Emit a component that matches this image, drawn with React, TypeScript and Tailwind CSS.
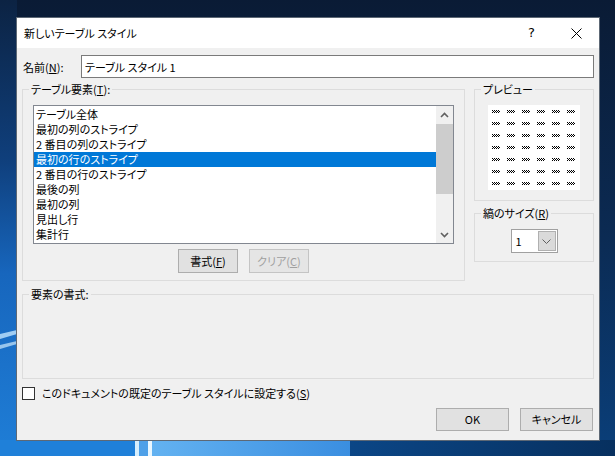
import React from "react";

const FONT = "[font-family:'Noto_Sans_CJK_JP','Noto_Sans',sans-serif] [font-feature-settings:'palt']";

const items = [
  "テーブル全体",
  "最初の列のストライプ",
  "2 番目の列のストライプ",
  "最初の行のストライプ",
  "2 番目の行のストライプ",
  "最後の列",
  "最初の列",
  "見出し行",
  "集計行",
];

function Pat() {
  const cells: [number, number][] = [];
  for (const x of [0, 2, 4, 6]) cells.push([x, 0]);
  for (const x of [1, 3, 5, 7]) cells.push([x, 1]);
  for (const x of [0, 2, 4, 6]) cells.push([x, 2]);
  return (
    <svg width="8" height="3" viewBox="0 0 8 3" shapeRendering="crispEdges" className="block">
      {cells.map(([x, y], i) => (
        <rect key={i} x={x} y={y} width={1} height={1} fill="#000" />
      ))}
    </svg>
  );
}

function Wallpaper() {
  return (
    <svg className="absolute inset-0" width="615" height="456" viewBox="0 0 615 456">
      <defs>
        <linearGradient id="base" x1="0" y1="0" x2="0" y2="1">
          <stop offset="0" stopColor="#0a1b35" />
          <stop offset="0.5" stopColor="#0b2a52" />
          <stop offset="1" stopColor="#0a3f7a" />
        </linearGradient>
        <linearGradient id="left" x1="0" y1="0" x2="0" y2="1">
          <stop offset="0" stopColor="#0c2343" />
          <stop offset="0.35" stopColor="#0f3f7c" />
          <stop offset="0.6" stopColor="#1766bd" />
          <stop offset="1" stopColor="#1f7ed7" />
        </linearGradient>
        <linearGradient id="pane" x1="0" y1="0" x2="1" y2="0">
          <stop offset="0" stopColor="#63b2f1" />
          <stop offset="1" stopColor="#3a8ee0" />
        </linearGradient>
        <linearGradient id="rightb" x1="0" y1="0" x2="1" y2="0">
          <stop offset="0" stopColor="#0b4686" />
          <stop offset="1" stopColor="#07305f" />
        </linearGradient>
      </defs>
      <rect width="615" height="456" fill="url(#base)" />
      <rect x="0" y="0" width="17" height="456" fill="url(#left)" />
      <polygon points="0,334 17,330 17,334 0,339" fill="#b8defa" opacity="0.85" />
      <polygon points="0,345 17,341 17,344 0,349" fill="#cfe9fc" opacity="0.7" />
      <rect x="0" y="440" width="135" height="16" fill="#1f80d9" />
      <rect x="135" y="440" width="4" height="16" fill="#d6eefd" />
      <rect x="139" y="440" width="9" height="16" fill="#4ea0e8" />
      <rect x="148" y="440" width="4" height="16" fill="#eaf7ff" />
      <rect x="152" y="440" width="198" height="16" fill="url(#pane)" />
      <rect x="350" y="440" width="265" height="16" fill="url(#rightb)" />
    </svg>
  );
}

function Btn({ children, disabled, w }: { children: React.ReactNode; disabled?: boolean; w: string }) {
  return (
    <div
      className={
        "flex items-center justify-center border " +
        w +
        (disabled
          ? " bg-[#e5e5e5] border-[#c4c4c4] text-[#a0a0a0]"
          : " bg-[#e1e1e1] border-[#adadad] text-black")
      }
    >
      {children}
    </div>
  );
}

function ChevronUp() {
  return (
    <svg width="9" height="6" viewBox="0 0 9 6" className="block">
      <path d="M1 5 L4.5 1.5 L8 5" fill="none" stroke="#606060" strokeWidth="1.6" />
    </svg>
  );
}
function ChevronDown() {
  return (
    <svg width="9" height="6" viewBox="0 0 9 6" className="block">
      <path d="M1 1 L4.5 4.5 L8 1" fill="none" stroke="#606060" strokeWidth="1.6" />
    </svg>
  );
}

export default function App() {
  return (
    <div className={"relative w-[615px] h-[456px] overflow-hidden text-[11px] text-black " + FONT}>
      <Wallpaper />
      <div className="relative pt-[17px] pl-[16px]">
        <div className="w-[584px] h-[424px] border border-[#5d6875] bg-[#f0f0f0] flex flex-col">
          {/* title bar */}
          <div className="h-[30px] bg-white flex items-center">
            <div className="flex-1 pl-[7px] leading-[16px]">新しいテーブル スタイル</div>
            <div className="w-[45px] h-[30px] flex items-center justify-center text-[13px] [font-family:'DejaVu_Sans',sans-serif]">
              ?
            </div>
            <div className="w-[45px] h-[30px] flex items-center justify-center">
              <svg width="11" height="11" viewBox="0 0 11 11" className="block">
                <path d="M0.5 0.5 L10.5 10.5 M10.5 0.5 L0.5 10.5" stroke="#000" strokeWidth="1" fill="none" />
              </svg>
            </div>
          </div>

          {/* body */}
          <div className="flex-1 flex flex-col pl-[5px] pr-[5px]">
            {/* name row */}
            <div className="mt-[7px] flex items-center h-[23px]">
              <div className="w-[59px] pl-[1px] leading-[16px]">
                名前(<span className="underline">N</span>):
              </div>
              <div className="flex-1 h-[23px] bg-white border border-[#7a7a7a] flex items-center pl-[3px] leading-[16px]">
                テーブル スタイル 1
              </div>
            </div>

            {/* group row */}
            <div className="mt-[3px] flex gap-[9px]">
              <fieldset className="w-[443px] border border-[#dcdcdc] p-0 m-0 min-w-0">
                <legend className="ml-[6px] px-[2px] leading-[16px]">
                  テーブル要素(<span className="underline">T</span>):
                </legend>
                <div className="px-[10px] pt-[8px] pb-[7px]">
                  <div className="h-[139px] border border-[#828790] bg-white flex">
                    <div className="flex-1 pt-[1px]">
                      {items.map((t, i) => (
                        <div
                          key={i}
                          className={
                            "h-[15px] leading-[15px] pl-[2px] whitespace-nowrap " +
                            (i === 3 ? "bg-[#0078d7] text-white" : "")
                          }
                        >
                          {t}
                        </div>
                      ))}
                    </div>
                    <div className="w-[17px] bg-[#f0f0f0] flex flex-col">
                      <div className="h-[17px] flex items-center justify-center">
                        <ChevronUp />
                      </div>
                      <div className="mt-[1px] h-[70px] bg-[#cdcdcd]" />
                      <div className="flex-1" />
                      <div className="h-[17px] flex items-center justify-center">
                        <ChevronDown />
                      </div>
                    </div>
                  </div>
                  <div className="mt-[5px] flex justify-center gap-[11px] h-[24px]">
                    <Btn w="w-[60px]">
                      <span>
                        書式(<span className="underline">F</span>)
                      </span>
                    </Btn>
                    <Btn w="w-[60px]" disabled>
                      <span>
                        クリア(<span className="underline">C</span>)
                      </span>
                    </Btn>
                  </div>
                </div>
              </fieldset>

              <div className="w-[120px] flex flex-col">
                <fieldset className="border border-[#dcdcdc] p-0 m-0 min-w-0">
                  <legend className="ml-[6px] px-[2px] leading-[16px]">プレビュー</legend>
                  <div className="pt-[8px] pb-[10px]">
                    <div className="mx-auto w-[92px] h-[85px] bg-white pt-[5px] pl-[4px]">
                      <div className="grid grid-cols-[repeat(6,8px)] gap-x-[7px] gap-y-[9px]">
                        {Array.from({ length: 42 }).map((_, i) => (
                          <Pat key={i} />
                        ))}
                      </div>
                    </div>
                  </div>
                </fieldset>
                <fieldset className="mt-[4px] border border-[#dcdcdc] p-0 m-0 min-w-0">
                  <legend className="ml-[6px] px-[2px] leading-[16px]">
                    縞のサイズ(<span className="underline">R</span>)
                  </legend>
                  <div className="pt-[8px] pb-[8px]">
                    <div className="mx-auto w-[47px] h-[24px] bg-white border border-[#a0a0a0] flex items-center">
                      <div className="flex-1 pl-[4px] leading-[16px]">1</div>
                      <div className="w-[18px] h-[20px] mr-[1px] bg-[#dadada] border border-[#b0b0b0] flex items-center justify-center">
                        <svg width="9" height="5" viewBox="0 0 9 5" className="block">
                          <path d="M0.5 0.5 L4.5 4.5 L8.5 0.5" fill="none" stroke="#606060" strokeWidth="1" />
                        </svg>
                      </div>
                    </div>
                  </div>
                </fieldset>
              </div>
            </div>

            {/* element format */}
            <fieldset className="mt-[5px] border border-[#dcdcdc] p-0 m-0 min-w-0">
              <legend className="ml-[6px] px-[2px] leading-[16px]">要素の書式:</legend>
              <div className="h-[76px]" />
            </fieldset>

            {/* checkbox */}
            <div className="mt-[7px] h-[15px] flex items-center">
              <div className="w-[13px] h-[13px] border border-[#333333] bg-white" />
              <div className="ml-[7px] leading-[15px] whitespace-nowrap">
                このドキュメントの既定のテーブル スタイルに設定する(<span className="underline">S</span>)
              </div>
            </div>

            {/* buttons */}
            <div className="mt-[7px] h-[23px] flex justify-end gap-[11px] pr-[1px]">
              <Btn w="w-[73px]">OK</Btn>
              <Btn w="w-[73px]">キャンセル</Btn>
            </div>
          </div>
        </div>
      </div>
    </div>
  );
}
